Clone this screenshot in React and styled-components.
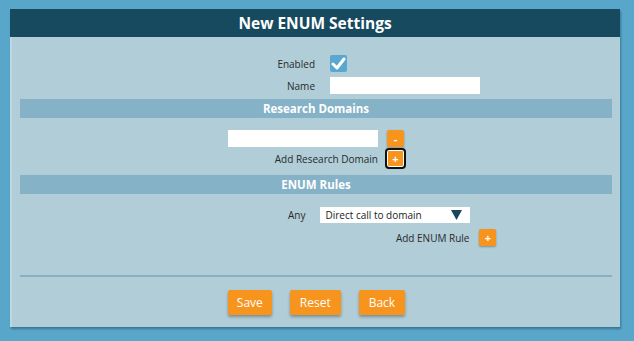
import React from "react";
import styled, { createGlobalStyle } from "styled-components";

const Global = createGlobalStyle`
  html, body { margin: 0; padding: 0; }
  body {
    background: #58a7cb;
    font-family: "Open Sans", "Noto Sans", "DejaVu Sans", sans-serif;
    width: 634px;
    height: 341px;
    overflow: hidden;
  }
`;

const Page = styled.div`
  padding: 9px 14px 0 10px;
`;

const Panel = styled.div`
  background: #b0cdd8;
  border-left: 2px solid #bcd8e2;
  box-shadow: 1px 2px 2px rgba(20, 60, 80, 0.45);
  height: 318px;
  display: flex;
  flex-direction: column;
`;

const Header = styled.div`
  background: #174a5f;
  color: #fff;
  height: 28px;
  margin-left: -2px;
  display: flex;
  align-items: center;
  justify-content: center;
  font-weight: 700;
  font-size: 15.5px;
`;

const Body = styled.div`
  padding: 18px 8px 0 8px;
  display: flex;
  flex-direction: column;
`;

const FieldGrid = styled.div`
  display: grid;
  grid-template-columns: 1fr 1fr;
  row-gap: 5px;
  align-items: center;
  margin-bottom: 5px;
`;

const Label = styled.span`
  font-size: 10px;
  color: #2a2a2a;
  text-align: right;
  padding-right: ${(p) => p.$pr || 0}px;
`;

const Control = styled.div`
  padding-left: 14px;
  display: flex;
  align-items: center;
`;

const Check = styled.div`
  width: 17px;
  height: 17px;
  border-radius: 2px;
  background: #5aa8d0;
  display: flex;
  align-items: center;
  justify-content: center;
`;

const TextInput = styled.div`
  width: ${(p) => p.$w || 150}px;
  height: 17px;
  background: #fff;
`;

const SectionBar = styled.div`
  background: #85b2c6;
  color: #fff;
  font-weight: 700;
  font-size: 11.5px;
  height: 19px;
  display: flex;
  align-items: center;
  justify-content: center;
`;

const CenterBlock = styled.div`
  align-self: center;
  display: flex;
  flex-direction: column;
  align-items: flex-end;
  gap: 3px;
  padding: ${(p) => p.$pad};
`;

const Row = styled.div`
  display: flex;
  align-items: center;
  gap: ${(p) => p.$gap || 9}px;
`;

const SmallBtn = styled.div`
  width: 17px;
  height: 17px;
  box-sizing: border-box;
  border-radius: 2px;
  background: #f7941d;
  color: #fff;
  font-weight: 700;
  font-size: 11px;
  display: flex;
  align-items: center;
  justify-content: center;
  box-shadow: 0 1px 2px rgba(0, 0, 0, 0.3);
  ${(p) =>
    p.$focus &&
    `
    outline: 2px solid #111;
    border: 1px solid #fff;
  `}
`;

const RulesBlock = styled.div`
  margin-left: 268px;
  padding: 13px 0 0 0;
  display: grid;
  justify-content: start;
  grid-template-columns: auto 150px 17px;
  column-gap: 9px;
  row-gap: 6px;
  align-items: center;
`;

const Select = styled.div`
  height: 16px;
  background: #fff;
  display: flex;
  align-items: center;
  justify-content: space-between;
  padding: 0 8px 0 5px;
  font-size: 10px;
  color: #222;
`;

const AddRule = styled.div`
  grid-column: 1 / 4;
  justify-self: end;
  display: flex;
  align-items: center;
  gap: 10px;
`;

const Divider = styled.div`
  height: 2px;
  background: #8aafc1;
  margin-top: 29px;
`;

const Buttons = styled.div`
  display: flex;
  justify-content: center;
  gap: 18px;
  margin-top: 13px;
  padding-left: 1px;
`;

const Btn = styled.div`
  height: 25px;
  padding: 0 ${(p) => p.$px || 9}px;
  border-radius: 2px;
  background: #f7941d;
  color: #fff;
  font-size: 12px;
  display: flex;
  align-items: center;
  box-shadow: 0 2px 3px rgba(0, 0, 0, 0.3);
`;

export default function App() {
  return (
    <>
      <Global />
      <Page>
        <Panel>
          <Header>New ENUM Settings</Header>
          <Body>
            <FieldGrid>
              <Label $pr={1}>Enabled</Label>
              <Control>
                <Check>
                  <svg width="15" height="13" viewBox="0 0 15 13">
                    <path d="M2 7 L6 11 L13 2" fill="none" stroke="#fff" strokeWidth="3" strokeLinecap="round" strokeLinejoin="round" />
                  </svg>
                </Check>
              </Control>
              <Label $pr={1}>Name</Label>
              <Control>
                <TextInput />
              </Control>
            </FieldGrid>
            <SectionBar>Research Domains</SectionBar>
            <CenterBlock $pad="12px 0 8px 0">
              <Row>
                <TextInput />
                <SmallBtn>-</SmallBtn>
              </Row>
              <Row>
                <Label>Add Research Domain</Label>
                <SmallBtn $focus>+</SmallBtn>
              </Row>
            </CenterBlock>
            <SectionBar>ENUM Rules</SectionBar>
            <RulesBlock>
              <Label $pr={6}>Any</Label>
              <Select>
                <span>Direct call to domain</span>
                <svg width="11" height="10" viewBox="0 0 11 10">
                  <path d="M0 0 H11 L5.5 10 Z" fill="#1b4558" />
                </svg>
              </Select>
              <span />
              <AddRule>
                <Label>Add ENUM Rule</Label>
                <SmallBtn>+</SmallBtn>
              </AddRule>
            </RulesBlock>
            <Divider />
            <Buttons>
              <Btn $px={9}>Save</Btn>
              <Btn $px={10}>Reset</Btn>
              <Btn $px={10}>Back</Btn>
            </Buttons>
          </Body>
        </Panel>
      </Page>
    </>
  );
}
